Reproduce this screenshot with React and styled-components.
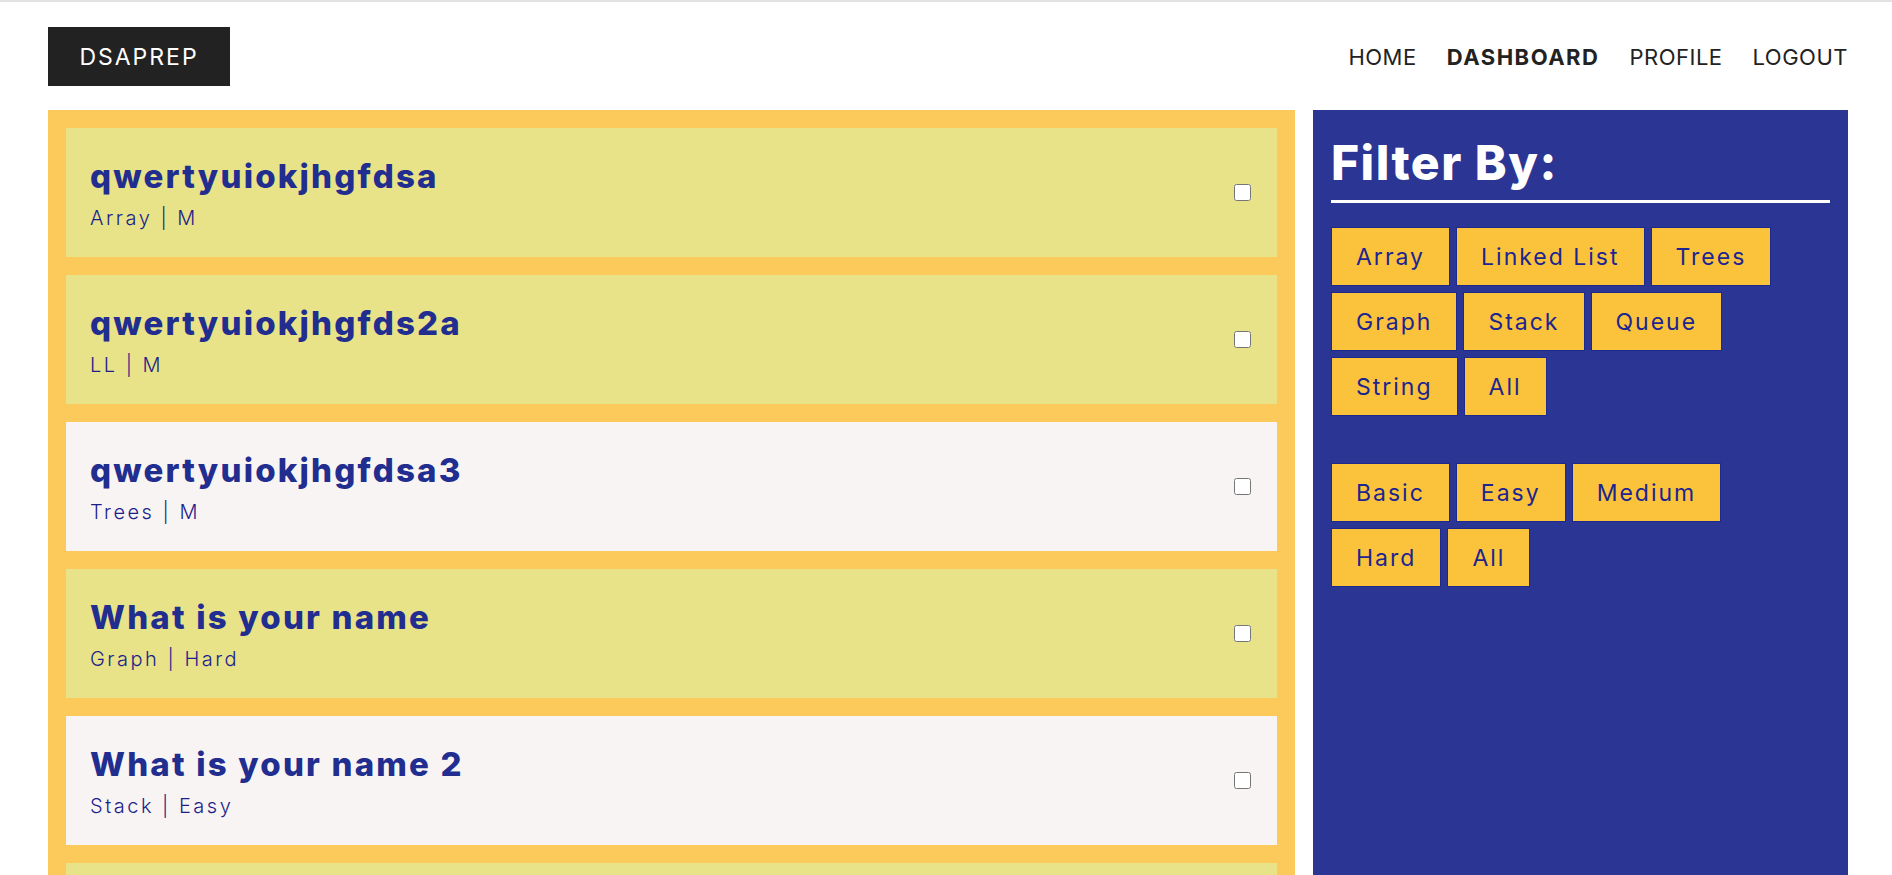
import styled, { createGlobalStyle } from 'styled-components';

const GlobalStyle = createGlobalStyle`
  html, body { margin: 0; padding: 0; background: #fff; }
  body {
    font-family: Inter, "Noto Sans", sans-serif;
    border-top: 2px solid #e2e2e2;
    overflow: hidden;
  }
`;

const questions = [
  { title: 'qwertyuiokjhgfdsa', topic: 'Array', level: 'M', done: false },
  { title: 'qwertyuiokjhgfds2a', topic: 'LL', level: 'M', done: false },
  { title: 'qwertyuiokjhgfdsa3', topic: 'Trees', level: 'M', done: true },
  { title: 'What is your name', topic: 'Graph', level: 'Hard', done: false },
  { title: 'What is your name 2', topic: 'Stack', level: 'Easy', done: true },
  { title: 'What is your name 3', topic: 'Queue', level: 'Basic', done: false },
];

const topics = ['Array', 'Linked List', 'Trees', 'Graph', 'Stack', 'Queue', 'String', 'All'];
const levels = ['Basic', 'Easy', 'Medium', 'Hard', 'All'];

const Page = styled.div`
  padding: 0 44px 0 48px;
`;

const Header = styled.header`
  display: flex;
  justify-content: space-between;
  align-items: center;
  padding: 25px 0 24px;
`;

const Logo = styled.div`
  width: 182px;
  height: 59px;
  background: #222;
  color: #fff;
  display: flex;
  align-items: center;
  justify-content: center;
  font-size: 23px;
  letter-spacing: 2px;
`;

const Nav = styled.nav`
  display: flex;
  gap: 30px;
`;

const NavLink = styled.a`
  color: #222;
  text-decoration: none;
  font-size: 22px;
  letter-spacing: ${p => (p.active ? '1.5px' : '0.5px')};
  font-weight: ${p => (p.active ? 700 : 400)};
`;

const Main = styled.main`
  display: flex;
  gap: 18px;
  align-items: stretch;
`;

const QuestionList = styled.section`
  width: 1247px;
  flex-shrink: 0;
  box-sizing: border-box;
  background: #fcc95b;
  padding: 18px;
  display: flex;
  flex-direction: column;
  gap: 18px;
`;

const Card = styled.div`
  height: 129px;
  box-sizing: border-box;
  background: ${p => (p.done ? '#f8f4f3' : '#e8e289')};
  padding: 0 26px 0 24px;
  display: flex;
  align-items: center;
  justify-content: space-between;
  flex-shrink: 0;
`;

const CardText = styled.div`
  align-self: flex-start;
  padding-top: 28px;
`;

const Title = styled.h3`
  margin: 0;
  font-size: 33px;
  line-height: 40px;
  font-weight: 800;
  letter-spacing: 2.2px;
  color: #212d8f;
`;

const Meta = styled.div`
  margin-top: 8px;
  font-size: 20px;
  line-height: 28px;
  font-weight: 300;
  letter-spacing: 2.5px;
  color: #1c1f8a;
`;

const Check = styled.input`
  width: 17px;
  height: 17px;
  margin: 0;
`;

const FilterPanel = styled.aside`
  flex: 1;
  background: #2b3593;
  padding: 18px;
  display: flex;
  flex-direction: column;
`;

const FilterHeading = styled.h2`
  margin: 5px 0 0;
  padding-bottom: 7px;
  font-size: 48px;
  line-height: 60px;
  font-weight: 800;
  letter-spacing: 1.5px;
  color: #fff;
  border-bottom: 3px solid #fff;
`;

const Groups = styled.div`
  display: flex;
  flex-direction: column;
  gap: 47px;
  margin-top: 24px;
`;

const ButtonGroup = styled.div`
  display: flex;
  flex-wrap: wrap;
  gap: 6px;
  max-width: 470px;
`;

const FilterButton = styled.button`
  height: 59px;
  padding: 0 24px;
  background: #fbc33b;
  border: 1px solid #1b2a8c;
  color: #1c2590;
  font-family: inherit;
  font-size: 23px;
  letter-spacing: 2px;
  cursor: pointer;
`;

export default function App() {
  return (
    <>
      <GlobalStyle />
      <Page>
        <Header>
          <Logo>DSAPREP</Logo>
          <Nav>
            <NavLink href="#">HOME</NavLink>
            <NavLink href="#" active>DASHBOARD</NavLink>
            <NavLink href="#">PROFILE</NavLink>
            <NavLink href="#">LOGOUT</NavLink>
          </Nav>
        </Header>
        <Main>
          <QuestionList>
            {questions.map(q => (
              <Card key={q.title} done={q.done}>
                <CardText>
                  <Title>{q.title}</Title>
                  <Meta>{q.topic} | {q.level}</Meta>
                </CardText>
                <Check type="checkbox" />
              </Card>
            ))}
          </QuestionList>
          <FilterPanel>
            <FilterHeading>Filter By:</FilterHeading>
            <Groups>
              <ButtonGroup>
                {topics.map(t => <FilterButton key={t}>{t}</FilterButton>)}
              </ButtonGroup>
              <ButtonGroup>
                {levels.map(l => <FilterButton key={l}>{l}</FilterButton>)}
              </ButtonGroup>
            </Groups>
          </FilterPanel>
        </Main>
      </Page>
    </>
  );
}
